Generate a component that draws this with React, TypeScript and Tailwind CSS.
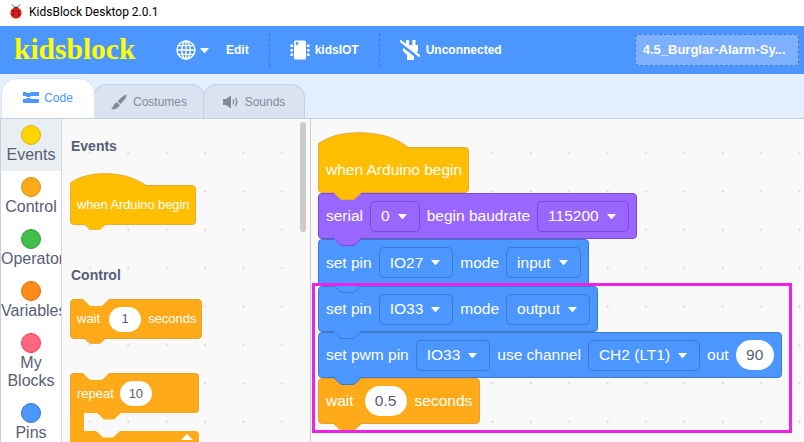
import React from "react";

const BLUE = { bg: "bg-[#4c97ff]", border: "border-[#3d79cc]", fill: "#4c97ff", stroke: "#3d79cc" };
const PURPLE = { bg: "bg-[#9966ff]", border: "border-[#774dcb]", fill: "#9966ff", stroke: "#774dcb" };
const ORANGE = { bg: "bg-[#ffab19]", border: "border-[#e6a02e]", fill: "#ffab19", stroke: "#e6a02e" };
const GOLD = { bg: "bg-[#ffbf00]", border: "border-[#e6ac33]", fill: "#ffbf00", stroke: "#e6ac33" };

type Tone = typeof BLUE;

const Caret = ({ className }: { className?: string }) => (
  <svg width="11" height="7" viewBox="0 0 11 7" className={className}>
    <path d="M1 1 H10 L6.3 5.6 Q5.5 6.4 4.7 5.6 Z" fill="#fff" />
  </svg>
);

const Tab = ({ tone, small }: { tone: Tone; small?: boolean }) => (
  <svg
    width={small ? 24 : 31}
    height={small ? 7 : 9}
    viewBox="0 0 31 9"
    className={`absolute top-full z-10 -mt-px ${small ? "left-[12px]" : "left-[13px]"}`}
  >
    <path d="M0 0 L8 7.5 Q9 8.5 10 8.5 H21 Q22 8.5 23 7.5 L31 0 Z" fill={tone.fill} />
    <path d="M0 0 L8 7.5 Q9 8.5 10 8.5 H21 Q22 8.5 23 7.5 L31 0" fill="none" stroke={tone.stroke} strokeWidth="1" />
  </svg>
);

const Dropdown = ({ label, tone }: { label: string; tone: Tone }) => (
  <div className={`flex h-[31px] items-center gap-[7px] rounded-[5px] border pl-[10px] pr-[11px] ${tone.border}`}>
    <span>{label}</span>
    <Caret />
  </div>
);

const Pill = ({ value, className }: { value: string; className?: string }) => (
  <div
    className={`flex h-[30px] min-w-[38px] items-center justify-center rounded-full bg-white px-[10px] text-[#575e75] ${className ?? ""}`}
  >
    {value}
  </div>
);

// one statement block of the stack on the canvas
const Block = ({ tone, cls, children }: { tone: Tone; cls: string; children: React.ReactNode }) => (
  <div
    className={`relative flex w-fit items-center gap-[7px] rounded-[4px] border pl-[7px] pr-[7px] text-[15.5px] text-white ${tone.bg} ${tone.border} ${cls}`}
  >
    {children}
    <Tab tone={tone} />
  </div>
);

const Dome = ({ tone, width, height }: { tone: Tone; width: number; height: number }) => (
  <svg
    width={width}
    height={height}
    viewBox="0 0 92 17"
    preserveAspectRatio="none"
    className="absolute -left-px bottom-full -mb-[2px]"
  >
    <path d="M0.5 17 V11 C22 -3.5 68 -3.5 92 16 V17 Z" fill={tone.fill} />
    <path d="M0.5 17 V11 C22 -3.5 68 -3.5 92 16" fill="none" stroke={tone.stroke} strokeWidth="1" />
  </svg>
);

// notch cut in the top of a palette block
const TopNotch = () => (
  <svg width="26" height="7" viewBox="0 0 26 7" className="absolute -top-px left-[12px]">
    <path d="M0 0 L6 6 Q7 7 8 7 H18 Q19 7 20 6 L26 0 Z" fill="#f9f9f9" />
  </svg>
);

const categories = [
  { name: ["Events"], color: "bg-[#ffd500]", ring: "border-[#d9b216]", active: true },
  { name: ["Control"], color: "bg-[#ffab19]", ring: "border-[#cf8b17]" },
  { name: ["Operators"], color: "bg-[#40bf4a]", ring: "border-[#389438]" },
  { name: ["Variables"], color: "bg-[#ff8c1a]", ring: "border-[#db6e00]" },
  { name: ["My", "Blocks"], color: "bg-[#ff6680]", ring: "border-[#ff3355]" },
  { name: ["Pins"], color: "bg-[#4c97ff]", ring: "border-[#3373cc]" },
];

const Globe = () => (
  <svg width="20" height="20" viewBox="0 0 20 20" fill="none" stroke="#fff" strokeWidth="1.4">
    <circle cx="10" cy="10" r="9" />
    <ellipse cx="10" cy="10" rx="4.2" ry="9" />
    <path d="M10 1 V19 M1 10 H19 M2.2 5.6 H17.8 M2.2 14.4 H17.8" />
  </svg>
);

const Chip = () => (
  <svg width="20" height="20" viewBox="0 0 20 20">
    <rect x="4" y="0.5" width="12" height="19" rx="1.5" fill="#fff" />
    <circle cx="7" cy="3.5" r="1.4" fill="#4c97ff" />
    <path d="M0.5 4.5 H3 V7 H0.5 Z M0.5 9 H3 V11.5 H0.5 Z M0.5 13.5 H3 V16 H0.5 Z M17 4.5 H19.5 V7 H17 Z M17 9 H19.5 V11.5 H17 Z M17 13.5 H19.5 V16 H17 Z" fill="#fff" />
  </svg>
);

const Unplug = () => (
  <svg width="20" height="20" viewBox="0 0 20 20">
    <path d="M6 0 H9 V5 H12.5 V0 H15.5 V5 H18 V11 L14 15 V20 H7 V15 L3 11 V5 H6 Z" fill="#fff" />
    <path d="M-1 2 L20 18.5" stroke="#4c97ff" strokeWidth="4" />
    <path d="M0 0.5 L20 16.5" stroke="#fff" strokeWidth="2.2" />
  </svg>
);

const Ladybug = () => (
  <svg width="12" height="15" viewBox="0 0 12 15">
    <path d="M2 0.5 L4 3 M10 0.5 L8 3" stroke="#333" strokeWidth="0.8" />
    <path d="M3 4.5 Q6 0.5 9 4.5 Z" fill="#222" />
    <ellipse cx="6" cy="9" rx="5.6" ry="5.5" fill="#e2231a" />
    <path d="M6 4 V14.5" stroke="#8a1410" strokeWidth="0.6" />
    <g fill="#3a0d0b">
      <circle cx="3.4" cy="7" r="0.9" />
      <circle cx="8.6" cy="7" r="0.9" />
      <circle cx="3" cy="10.5" r="0.9" />
      <circle cx="9" cy="10.5" r="0.9" />
    </g>
  </svg>
);

const CodeIcon = () => (
  <svg width="16" height="11" viewBox="0 0 16 11" fill="#4c97ff">
    <path d="M0 1 Q0 0 1 0 H3 L4 1 H7 L8 0 H16 V4 H8 L7 5 H4 L3 4 H0 Z" />
    <path d="M0 7 H3 L4 6 H7 L8 7 H16 V10 Q16 11 15 11 H1 Q0 11 0 10 Z" />
  </svg>
);

const BrushIcon = () => (
  <svg width="16" height="16" viewBox="0 0 16 16" fill="#868a96">
    <path d="M15.5 0.5 C16 3 13 7 9.5 10 L6.5 7.5 C9 4 13 1 15.5 0.5 Z" />
    <path d="M5.8 8.3 L8.7 10.8 C8 14 4 16 0 15 C2.5 14 2 10 5.8 8.3 Z" />
  </svg>
);

const SoundIcon = () => (
  <svg width="16" height="14" viewBox="0 0 16 14" fill="#868a96">
    <path d="M0 4 H3 L8 0.5 V13.5 L3 10 H0 Z" />
    <path d="M10 4.5 Q11.5 7 10 9.5 M12.5 3 Q15 7 12.5 11" fill="none" stroke="#868a96" strokeWidth="1.4" />
  </svg>
);

const dots =
  "bg-[radial-gradient(circle,#dddddd_1px,transparent_1.2px)] bg-[size:38.4px_38.4px] bg-[position:8.7px_14.8px]";

export default function App() {
  return (
    <div className="flex h-[442px] w-[804px] flex-col overflow-hidden bg-white font-['Liberation_Sans',sans-serif]">
      {/* window title */}
      <div className="flex h-[26px] items-center bg-white pb-[3px] pl-[10px]">
        <Ladybug />
        <span className="ml-[7px] font-['Roboto',sans-serif] text-[12px] text-black">KidsBlock Desktop 2.0.1</span>
      </div>

      {/* menu bar */}
      <div className="flex h-[48px] items-center bg-[#4c97ff] text-[12px] font-bold text-white">
        <span className="ml-[14px] w-[162px] font-['Liberation_Serif',serif] text-[29.5px] leading-none text-[#ffff00]">
          kidsblock
        </span>
        <Globe />
        <Caret className="ml-[3px]" />
        <span className="ml-[16px]">Edit</span>
        <div className="ml-[20px] h-[34px] border-l border-dashed border-[#3d79cc]" />
        <div className="ml-[20px]">
          <Chip />
        </div>
        <span className="ml-[5px]">kidsIOT</span>
        <div className="ml-[20px] h-[34px] border-l border-dashed border-[#3d79cc]" />
        <div className="ml-[20px]">
          <Unplug />
        </div>
        <span className="ml-[6px] w-[209px]">Unconnected</span>
        <div className="flex h-[32px] w-[164px] items-center rounded-[4px] border border-dashed border-[#3d79cc] bg-[#7db0ff] pl-[7px] text-[13px]">
          4.5_Burglar-Alarm-Sy...
        </div>
      </div>

      {/* tabs */}
      <div className="flex h-[45px] items-end border-b border-[#c4cfdf] bg-[#e3eeff] pl-px text-[12px]">
        <div className="z-10 flex h-[40px] w-[94px] items-center justify-center gap-[5px] rounded-t-[16px] border border-b-0 border-[#d9e3f2] bg-white pb-[2px] text-[#4c97ff]">
          <CodeIcon />
          <span>Code</span>
        </div>
        <div className="-ml-[2px] flex h-[34px] w-[112px] items-center justify-center gap-[6px] rounded-t-[14px] border border-b-0 border-[#c4cfdf] bg-[#d9e3f2] text-[#868a96]">
          <BrushIcon />
          <span>Costumes</span>
        </div>
        <div className="-ml-[2px] flex h-[34px] w-[102px] items-center justify-center gap-[6px] rounded-t-[14px] border border-b-0 border-[#c4cfdf] bg-[#d9e3f2] text-[#868a96]">
          <SoundIcon />
          <span>Sounds</span>
        </div>
      </div>

      <div className="flex min-h-0 flex-1">
        {/* category list */}
        <div className="w-[62px] shrink-0 overflow-hidden border-x border-x-[#c4cfdf] border-r-[#d9d9d9] bg-white text-[16px] leading-[18px] text-[#575e75]">
          {categories.map((c) => (
            <div
              key={c.name[0]}
              className={`flex flex-col items-center pt-[6px] pb-[7px] ${c.active ? "bg-[#e9eef2]" : ""}`}
            >
              <div className={`mb-px h-[20px] w-[20px] rounded-full border ${c.color} ${c.ring}`} />
              {c.name.map((line) => (
                <span key={line} className="block w-full whitespace-nowrap text-center">
                  {line}
                </span>
              ))}
            </div>
          ))}
        </div>

        {/* palette */}
        <div className={`relative w-[249px] shrink-0 overflow-hidden border-r border-[#cccccc] bg-[#f9f9f9] pl-[8px] pt-[18px] ${dots}`}>
          <div className="ml-px text-[14px] font-bold leading-[18px] text-[#575e75]">Events</div>
          <div className="relative mt-[30px] flex h-[40px] w-[126px] items-center rounded-[4px] border border-[#e6ac33] bg-[#ffbf00] pl-[6px] text-[12.8px] text-white">
            <Dome tone={GOLD} width={78} height={15} />
            when Arduino begin
            <Tab tone={GOLD} small />
          </div>

          <div className="ml-px mt-[41px] text-[14px] font-bold leading-[18px] text-[#575e75]">Control</div>

          <div className="relative mt-[15px] flex h-[40px] w-[132px] items-center gap-[9px] rounded-[4px] border border-[#e6a02e] bg-[#ffab19] pl-[6px] text-[13px] text-white">
            <TopNotch />
            <span>wait</span>
            <div className="flex h-[25px] w-[32px] items-center justify-center rounded-full bg-white text-[#575e75]">1</div>
            <span className="-ml-[2px]">seconds</span>
            <Tab tone={ORANGE} small />
          </div>

          <div className="relative mt-[34px]">
            <div className="relative flex h-[40px] w-[129px] items-center gap-[6px] rounded-[4px] rounded-bl-none border border-b-0 border-[#e6a02e] bg-[#ffab19] pl-[6px] text-[13px] text-white">
              <TopNotch />
              <span>repeat</span>
              <div className="flex h-[25px] w-[32px] items-center justify-center rounded-full bg-white text-[#575e75]">10</div>
              <svg width="24" height="7" viewBox="0 0 31 9" className="absolute left-[26px] top-full z-10">
                <path d="M0 0 L8 7.5 Q9 8.5 10 8.5 H21 Q22 8.5 23 7.5 L31 0 Z" fill="#ffab19" />
              </svg>
            </div>
            <div className="flex h-[18px]">
              <div className="w-[14px] bg-[#ffab19]" />
            </div>
            <div className="relative h-[30px] w-[129px] rounded-[4px] rounded-tl-none bg-[#ffab19]">
              <svg width="24" height="7" viewBox="0 0 31 9" className="absolute left-[26px] top-0">
                <path d="M0 0 L8 7.5 Q9 8.5 10 8.5 H21 Q22 8.5 23 7.5 L31 0 Z" fill="#f9f9f9" />
              </svg>
              <svg width="12" height="6" viewBox="0 0 12 6" className="absolute right-[6px] top-[3px]">
                <path d="M0 6 L6 0 L12 6 Z" fill="#fff" />
              </svg>
            </div>
          </div>

          <div className="absolute left-[238px] top-[3px] h-[110px] w-[6px] rounded-full bg-[#cccccc]" />
        </div>

        {/* canvas */}
        <div className={`relative flex-1 overflow-hidden bg-[#f9f9f9] pl-[7px] pt-[28px] ${dots}`}>
          <div className="relative flex h-[46px] w-[151px] items-center rounded-[4px] border border-[#e6ac33] bg-[#ffbf00] pl-[7px] text-[15.5px] text-white">
            <Dome tone={GOLD} width={92} height={18} />
            when Arduino begin
            <Tab tone={GOLD} />
          </div>
          <Block tone={PURPLE} cls="z-[6] h-[46px]">
            <span>serial</span>
            <Dropdown label="0" tone={PURPLE} />
            <span>begin baudrate</span>
            <Dropdown label="115200" tone={PURPLE} />
          </Block>
          <Block tone={BLUE} cls="z-[5] h-[47px]">
            <span>set pin</span>
            <Dropdown label="IO27" tone={BLUE} />
            <span>mode</span>
            <Dropdown label="input" tone={BLUE} />
          </Block>
          <Block tone={BLUE} cls="z-[4] h-[46px]">
            <span>set pin</span>
            <Dropdown label="IO33" tone={BLUE} />
            <span>mode</span>
            <Dropdown label="output" tone={BLUE} />
          </Block>
          <Block tone={BLUE} cls="z-[3] h-[46px]">
            <span>set pwm pin</span>
            <Dropdown label="IO33" tone={BLUE} />
            <span>use channel</span>
            <Dropdown label="CH2 (LT1)" tone={BLUE} />
            <span>out</span>
            <Pill value="90" />
          </Block>
          <Block tone={ORANGE} cls="z-[2] h-[46px]">
            <span>wait</span>
            <Pill value="0.5" className="ml-[4px] w-[42px]" />
            <span className="ml-[1px]">seconds</span>
          </Block>

          {/* annotation frame drawn over the blocks */}
          <div className="absolute left-[1px] top-[164px] z-20 h-[150px] w-[480px] border-[3px] border-[#ee22e6]" />
        </div>
      </div>
    </div>
  );
}
